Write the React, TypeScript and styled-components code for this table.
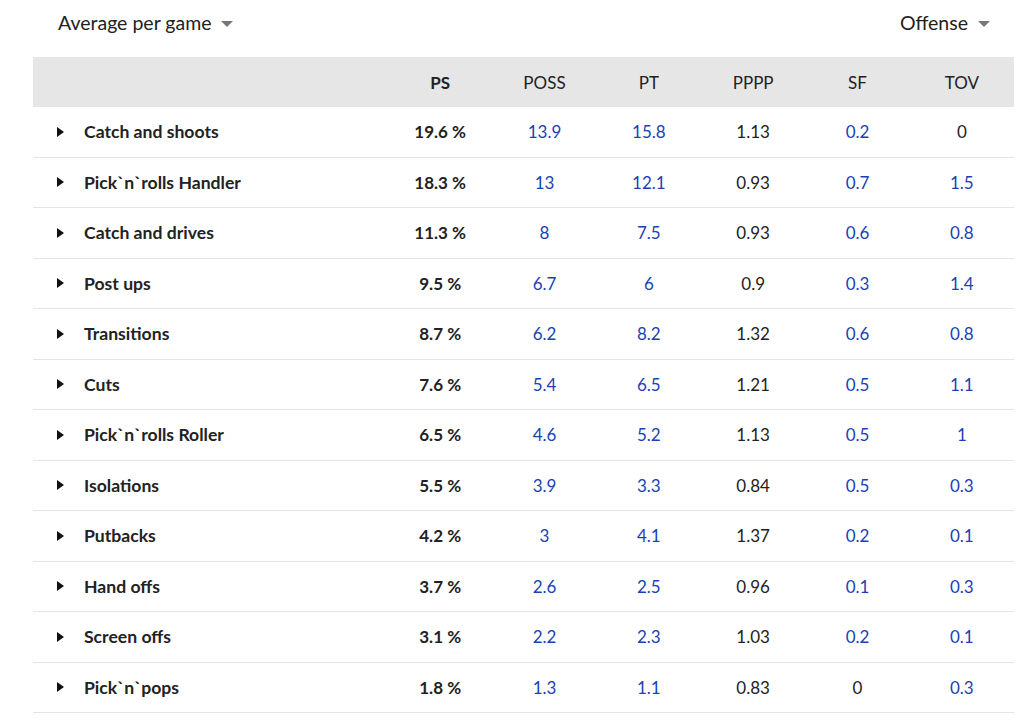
import styled, { createGlobalStyle } from 'styled-components';

interface PlayRow {
  name: string;
  ps: string;
  poss: string;
  pt: string;
  pppp: string;
  sf: string;
  tov: string;
}

const rows: PlayRow[] = [
  { name: 'Catch and shoots', ps: '19.6 %', poss: '13.9', pt: '15.8', pppp: '1.13', sf: '0.2', tov: '0' },
  { name: 'Pick`n`rolls Handler', ps: '18.3 %', poss: '13', pt: '12.1', pppp: '0.93', sf: '0.7', tov: '1.5' },
  { name: 'Catch and drives', ps: '11.3 %', poss: '8', pt: '7.5', pppp: '0.93', sf: '0.6', tov: '0.8' },
  { name: 'Post ups', ps: '9.5 %', poss: '6.7', pt: '6', pppp: '0.9', sf: '0.3', tov: '1.4' },
  { name: 'Transitions', ps: '8.7 %', poss: '6.2', pt: '8.2', pppp: '1.32', sf: '0.6', tov: '0.8' },
  { name: 'Cuts', ps: '7.6 %', poss: '5.4', pt: '6.5', pppp: '1.21', sf: '0.5', tov: '1.1' },
  { name: 'Pick`n`rolls Roller', ps: '6.5 %', poss: '4.6', pt: '5.2', pppp: '1.13', sf: '0.5', tov: '1' },
  { name: 'Isolations', ps: '5.5 %', poss: '3.9', pt: '3.3', pppp: '0.84', sf: '0.5', tov: '0.3' },
  { name: 'Putbacks', ps: '4.2 %', poss: '3', pt: '4.1', pppp: '1.37', sf: '0.2', tov: '0.1' },
  { name: 'Hand offs', ps: '3.7 %', poss: '2.6', pt: '2.5', pppp: '0.96', sf: '0.1', tov: '0.3' },
  { name: 'Screen offs', ps: '3.1 %', poss: '2.2', pt: '2.3', pppp: '1.03', sf: '0.2', tov: '0.1' },
  { name: 'Pick`n`pops', ps: '1.8 %', poss: '1.3', pt: '1.1', pppp: '0.83', sf: '0', tov: '0.3' },
];

const isLink = (v: string) => v !== '0';

const GlobalStyle = createGlobalStyle`
  body {
    margin: 0;
    background: #fff;
    font-family: Lato, "Open Sans", sans-serif;
    color: #222;
  }
`;

const Page = styled.div`
  padding: 0 10px 0 33px;
`;

const Filters = styled.div`
  display: flex;
  justify-content: space-between;
  align-items: center;
  height: 45px;
  padding: 0 24px 0 25px;
  font-size: 19.5px;
  color: #222;
`;

const Select = styled.div`
  display: flex;
  align-items: center;
  gap: 10px;
`;

const Caret = styled.span`
  width: 0;
  height: 0;
  border-left: 6px solid transparent;
  border-right: 6px solid transparent;
  border-top: 6px solid #777;
  margin-top: 2px;
`;

const Table = styled.div`
  margin-top: 12px;
`;

const Grid = styled.div<{ head?: boolean }>`
  display: grid;
  grid-template-columns: 355px repeat(6, 1fr);
  align-items: center;
  height: ${(p) => (p.head ? '50px' : '49.5px')};
  background: ${(p) => (p.head ? '#e6e6e6' : '#fff')};
  border-bottom: ${(p) => (p.head ? 'none' : '1px solid #e1e5e7')};
  font-size: 17px;
`;

const HeadCell = styled.div<{ bold?: boolean }>`
  text-align: center;
  font-weight: ${(p) => (p.bold ? 700 : 400)};
  color: #222;
`;

const NameCell = styled.div`
  display: flex;
  align-items: center;
  padding-left: 24px;
  gap: 20px;
  font-size: 17.6px;
  font-weight: 700;
`;

const Arrow = styled.span`
  width: 0;
  height: 0;
  border-top: 5.5px solid transparent;
  border-bottom: 5.5px solid transparent;
  border-left: 7px solid #111;
`;

const Cell = styled.div<{ bold?: boolean; link?: boolean }>`
  text-align: center;
  font-weight: ${(p) => (p.bold ? 700 : 400)};
  color: ${(p) => (p.link ? '#1b3fb5' : '#222')};
`;

export default function App() {
  return (
    <Page>
      <GlobalStyle />
      <Filters>
        <Select>
          Average per game <Caret />
        </Select>
        <Select>
          Offense <Caret />
        </Select>
      </Filters>
      <Table>
        <Grid head>
          <HeadCell />
          <HeadCell bold>PS</HeadCell>
          <HeadCell>POSS</HeadCell>
          <HeadCell>PT</HeadCell>
          <HeadCell>PPPP</HeadCell>
          <HeadCell>SF</HeadCell>
          <HeadCell>TOV</HeadCell>
        </Grid>
        {rows.map((r) => (
          <Grid key={r.name}>
            <NameCell>
              <Arrow />
              {r.name}
            </NameCell>
            <Cell bold>{r.ps}</Cell>
            <Cell link>{r.poss}</Cell>
            <Cell link>{r.pt}</Cell>
            <Cell>{r.pppp}</Cell>
            <Cell link={isLink(r.sf)}>{r.sf}</Cell>
            <Cell link={isLink(r.tov)}>{r.tov}</Cell>
          </Grid>
        ))}
      </Table>
    </Page>
  );
}
